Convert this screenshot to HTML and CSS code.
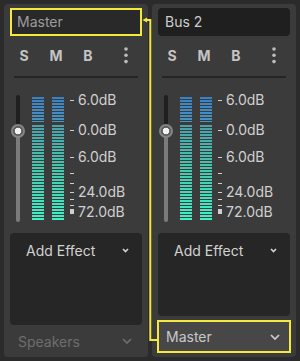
FILE: index.html
```html
<!DOCTYPE html>
<html>
<head>
    <title>Audio Buses</title>
    <link rel="stylesheet" href="styles.css">
</head>
<body>
<div class="mixer">

    <div class="strip">
        <div class="bus-name is-master hl">Master</div>
        <div class="bus-tools">
            <span class="tool">S</span>
            <span class="tool">M</span>
            <span class="tool">B</span>
            <span class="tool-menu">
                <svg width="4" height="17" viewBox="0 0 4 17"><circle cx="2" cy="2" r="1.8"/><circle cx="2" cy="8.3" r="1.8"/><circle cx="2" cy="14.6" r="1.8"/></svg>
            </span>
        </div>
        <div class="sep"></div>
        <div class="meter">
            <div class="fader">
                <div class="fader-track"></div>
                <div class="fader-knob"></div>
            </div>
            <div class="vu"><div class="vu-hot"></div><div class="vu-ok"></div></div>
            <div class="vu"><div class="vu-hot"></div><div class="vu-ok"></div></div>
            <div class="scale">
                <div class="mark" style="top:0px"><span class="tick"></span><span class="db">6.0dB</span></div>
                <div class="mark" style="top:30px"><span class="tick"></span><span class="db">0.0dB</span></div>
                <div class="mark" style="top:57px"><span class="tick"></span><span class="db">6.0dB</span></div>
                <div class="mark" style="top:73px"><span class="tick"></span></div>
                <div class="mark" style="top:83px"><span class="tick"></span></div>
                <div class="mark" style="top:92px"><span class="tick"></span><span class="db">24.0dB</span></div>
                <div class="mark" style="top:99px"><span class="tick"></span></div>
                <div class="mark" style="top:105px"><span class="tick"></span></div>
                <div class="mark" style="top:112px"><span class="tick tick-block"></span><span class="db">72.0dB</span></div>
            </div>
        </div>
        <div class="effects">
            <div class="effects-head">
                <span>Add Effect</span>
                <svg class="chev-sm" width="7" height="5" viewBox="0 0 7 5"><path d="M1 1 L3.5 3.6 L6 1"/></svg>
            </div>
        </div>
        <div class="send is-disabled">
            <span>Speakers</span>
            <svg class="chev" width="10" height="6" viewBox="0 0 10 6"><path d="M1 1 L5 5 L9 1"/></svg>
        </div>
    </div>

    <div class="strip">
        <div class="bus-name">Bus 2</div>
        <div class="bus-tools">
            <span class="tool">S</span>
            <span class="tool">M</span>
            <span class="tool">B</span>
            <span class="tool-menu">
                <svg width="4" height="17" viewBox="0 0 4 17"><circle cx="2" cy="2" r="1.8"/><circle cx="2" cy="8.3" r="1.8"/><circle cx="2" cy="14.6" r="1.8"/></svg>
            </span>
        </div>
        <div class="sep"></div>
        <div class="meter">
            <div class="fader">
                <div class="fader-track"></div>
                <div class="fader-knob"></div>
            </div>
            <div class="vu"><div class="vu-hot"></div><div class="vu-ok"></div></div>
            <div class="vu"><div class="vu-hot"></div><div class="vu-ok"></div></div>
            <div class="scale">
                <div class="mark" style="top:0px"><span class="tick"></span><span class="db">6.0dB</span></div>
                <div class="mark" style="top:30px"><span class="tick"></span><span class="db">0.0dB</span></div>
                <div class="mark" style="top:57px"><span class="tick"></span><span class="db">6.0dB</span></div>
                <div class="mark" style="top:73px"><span class="tick"></span></div>
                <div class="mark" style="top:83px"><span class="tick"></span></div>
                <div class="mark" style="top:92px"><span class="tick"></span><span class="db">24.0dB</span></div>
                <div class="mark" style="top:99px"><span class="tick"></span></div>
                <div class="mark" style="top:105px"><span class="tick"></span></div>
                <div class="mark" style="top:112px"><span class="tick tick-block"></span><span class="db">72.0dB</span></div>
            </div>
        </div>
        <div class="effects">
            <div class="effects-head">
                <span>Add Effect</span>
                <svg class="chev-sm" width="7" height="5" viewBox="0 0 7 5"><path d="M1 1 L3.5 3.6 L6 1"/></svg>
            </div>
        </div>
        <div class="send-wrap">
            <div class="send hl-out">
                <span>Master</span>
                <svg class="chev" width="10" height="6" viewBox="0 0 10 6"><path d="M1 1 L5 5 L9 1"/></svg>
            </div>
        </div>
    </div>

</div>

<!-- link between the send and its target bus -->
<svg class="link" width="300" height="361" viewBox="0 0 300 361">
    <path d="M146 20 H150.3 V340 H158" fill="none" stroke="#f4e93c" stroke-width="2"/>
    <polygon points="142.5,20 147,17.6 147,22.4" fill="#f4e93c"/>
</svg>
</body>
</html>
```

FILE: styles.css
```css
body {
    margin: 0;
    background-color: #2b2b2b;
    font-family: Inter, "Noto Sans", sans-serif;
    color: #cccccc;
}

.mixer {
    display: flex;
    gap: 4px;
    padding: 4px;
}

.strip {
    width: 144px;
    height: 353px;
    box-sizing: border-box;
    padding: 4px 6px 0 6px;
    background-color: #3b3b3b;
    border-radius: 4px;
    display: flex;
    flex-direction: column;
}

.bus-name {
    height: 28px;
    line-height: 28px;
    padding-left: 7px;
    font-size: 14px;
    color: #cdcdcd;
    background-color: #1f1f1f;
    border-radius: 4px;
}

.bus-name.is-master {
    color: #9c9c9c;
    background-color: #292929;
    border-radius: 0;
}

.hl {
    box-shadow: inset 0 0 0 2px #f4e93c;
}

.hl-out {
    box-shadow: 0 0 0 1px #f4e93c, inset 0 0 0 1px #f4e93c;
}

.bus-tools {
    display: flex;
    align-items: center;
    gap: 4px;
    height: 30px;
    margin-top: 4px;
    padding-right: 4px;
}

.tool {
    width: 28px;
    text-align: center;
    font-size: 14px;
    font-weight: 700;
    color: #c4c4c4;
}

.tool-menu {
    margin-left: auto;
    width: 24px;
    display: flex;
    justify-content: center;
}

.tool-menu svg {
    fill: #bdbdbd;
}

.sep {
    height: 2px;
    margin: 6px 4px 0 4px;
    background-color: #252525;
}

.meter {
    display: flex;
    height: 130px;
    margin-top: 15px;
}

.fader {
    position: relative;
    width: 16px;
    height: 127px;
    margin-top: 2px;
}

.fader-track {
    width: 4px;
    height: 100%;
    margin-left: 6px;
    border-radius: 2px;
    background: linear-gradient(#1f1f1f 0 36px, #7b7b7b 36px);
}

.fader-knob {
    position: absolute;
    left: 1px;
    top: 29px;
    width: 10px;
    height: 10px;
    border-radius: 50%;
    border: 2px solid #858585;
    background: radial-gradient(circle, #f2f2f2 0 3px, #5b5b5b 3.6px);
}

.vu {
    width: 12px;
    height: 124px;
    margin-top: 4px;
    margin-left: 6px;
    display: flex;
    flex-direction: column;
}

.vu + .vu {
    margin-left: 8px;
}

.vu-hot {
    height: 25px;
    background:
        repeating-linear-gradient(to bottom, transparent 0 2px, #3b3b3b 2px 3px),
        linear-gradient(#3b80c6, #4695c2);
}

.vu-ok {
    flex: 1;
    margin-top: 3px;
    background:
        repeating-linear-gradient(to bottom, transparent 0 2px, #3b3b3b 2px 3px),
        linear-gradient(#4aa0ac, #46c6ae 45%, #3ef2c8);
}

.scale {
    position: relative;
    flex: 1;
    margin-left: 6px;
}

.mark {
    position: absolute;
    left: 0;
    height: 14px;
    display: flex;
    align-items: center;
    gap: 4px;
}

.tick {
    width: 4px;
    height: 1px;
    background-color: #cfcfcf;
}

.tick-block {
    height: 5px;
    margin-top: -2px;
}

.db {
    font-size: 14px;
    line-height: 14px;
    color: #d0d0d0;
}

.effects {
    flex: 1;
    margin-top: 10px;
    background-color: #262626;
    border-radius: 4px;
}

.effects-head {
    display: flex;
    align-items: center;
    justify-content: space-between;
    height: 34px;
    padding: 0 13px 0 16px;
    font-size: 14px;
    color: #d2d2d2;
}

.chev-sm path,
.chev path {
    fill: none;
    stroke: #cfcfcf;
    stroke-width: 1.7;
}

.send {
    display: flex;
    align-items: center;
    justify-content: space-between;
    height: 32px;
    padding: 0 10px 0 8px;
    font-size: 14px;
    color: #c8c8c8;
}

.send.is-disabled {
    color: #6e6e6e;
}

.send.is-disabled .chev path {
    stroke: #6e6e6e;
}

.send-wrap {
    padding: 5px 0;
}

.send-wrap .send {
    height: 31px;
    background-color: #474747;
}

.link {
    position: absolute;
    left: 0;
    top: 0;
    pointer-events: none;
}
```
